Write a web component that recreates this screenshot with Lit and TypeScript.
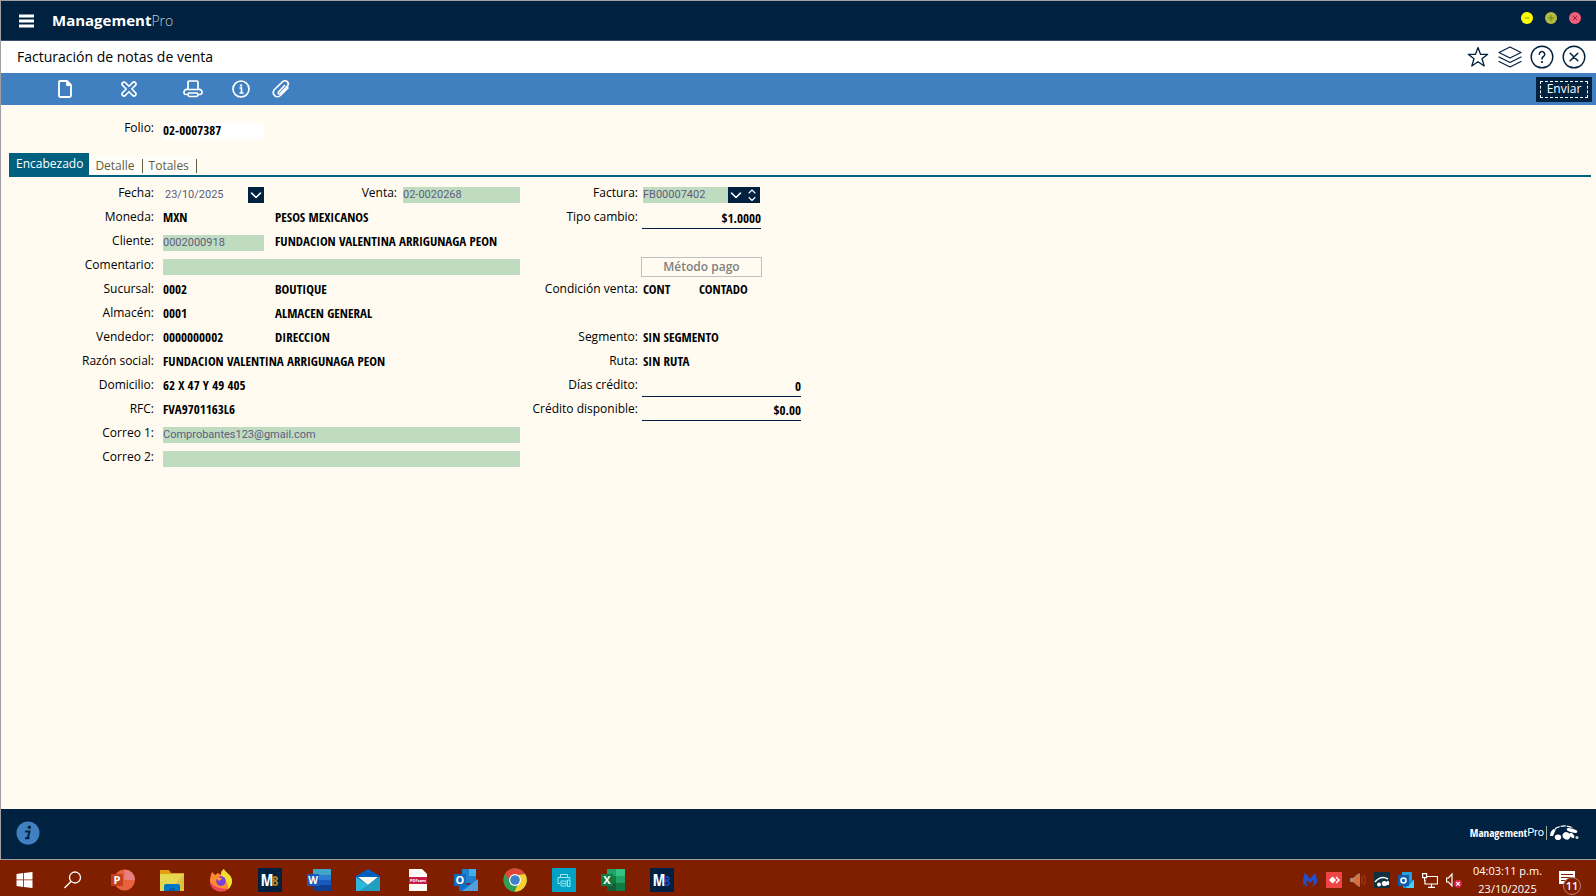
import { LitElement, html, svg, css, nothing, type TemplateResult } from "lit";
import { customElement, property } from "lit/decorators.js";

type Glyph = TemplateResult;

const icon = (size: number, view: string, body: unknown): Glyph =>
  html`<svg width=${size} height=${size} viewBox=${view} fill="none" aria-hidden="true">${body}</svg>`;

const line = (d: string, width = 2) =>
  svg`<path d=${d} stroke="currentColor" stroke-width=${width} stroke-linecap="round" stroke-linejoin="round"/>`;

const icons = {
  menu: icon(16, "0 0 16 16", svg`<path d="M0 3h15M0 8h15M0 13h15" stroke="currentColor" stroke-width="3"/>`),
  page: icon(20, "0 0 20 20", line("M5 2h7l4 4v10.500a1.500 1.500 0 0 1-1.500 1.500h-9A1.500 1.500 0 0 1 4 16.500V3a1 1 0 0 1 1-1zM12 2v4h4", 1.8)),
  cross: icon(20, "0 0 20 20", line("M10 7.300l3.600-3.700a1.900 1.900 0 0 1 2.800 2.800L12.800 10l3.600 3.600a1.900 1.900 0 0 1-2.800 2.800L10 12.700l-3.600 3.700a1.900 1.900 0 0 1-2.800-2.800L7.200 10 3.600 6.400a1.900 1.900 0 0 1 2.800-2.800z", 1.6)),
  print: icon(20, "0 0 20 20", line("M5 10V3a1 1 0 0 1 1-1h8a1 1 0 0 1 1 1v7M4 10.500h12a2.500 2.500 0 0 1 3 2.500v1a2 2 0 0 1-2 1.500h-2M5 15.500H3A2 2 0 0 1 1 14v-1a2.500 2.500 0 0 1 3-2.500M6.500 14h7a1.500 1.500 0 0 1 1.500 1.500A2 2 0 0 1 13.500 17.500h-7A2 2 0 0 1 5 15.500 1.500 1.500 0 0 1 6.500 14z", 1.7)),
  info: icon(20, "0 0 20 20", svg`<circle cx="10" cy="10" r="8" stroke="currentColor" stroke-width="1.700"/><path d="M8.500 9H10.500V14M8.500 14h4" stroke="currentColor" stroke-width="1.600"/><circle cx="10" cy="6.500" r="1.200" fill="currentColor"/>`),
  clip: icon(20, "0 0 20 20", line("M13.500 6.500l-6 6.500a1.200 1.200 0 0 0 1.800 1.600l7-7.400a3.200 3.200 0 0 0-4.600-4.500L3.500 10.500a4.200 4.200 0 0 0 5.900 6l7.600-7.700", 1.7)),
  star: icon(24, "0 0 24 24", line("M12 2.500l2.500 6.800h7.200l-5.700 4.500 2.200 7.200L12 16.800 5.800 21 8 13.800 2.300 9.300h7.200z", 1.3)),
  layers: icon(24, "0 0 24 24", line("M12 2l11 5.500L12 13 1 7.500zM1 12L12 17.500 23 12M1 16.500L12 22l11-5.500", 1.2)),
  help: icon(24, "0 0 24 24", svg`<circle cx="12" cy="12" r="10.800" stroke="currentColor" stroke-width="1.400"/>${line("M9.300 9.200a2.700 2.700 0 1 1 4.200 2.300C12.400 12.200 12 12.800 12 14", 1.5)}<circle cx="12" cy="17" r="1.100" fill="currentColor"/>`),
  close: icon(24, "0 0 24 24", svg`<circle cx="12" cy="12" r="10.800" stroke="currentColor" stroke-width="1.400"/>${line("M8.200 8.200l7.600 7.600M15.800 8.200l-7.600 7.600", 1.5)}`),
  down: icon(16, "0 0 16 16", line("M3.500 6L8 10.500 12.500 6", 1.6)),
  spin: icon(16, "0 0 16 16", line("M5 6l3-3 3 3M5 10.500l3 3 3-3", 1.1)),
  notice: icon(24, "0 0 24 24", svg`<circle cx="12" cy="12" r="11.500" fill="#4080c0"/><circle cx="13.300" cy="6.300" r="1.700" fill="#00213f"/><path d="M9 10.500h4.500l-1.700 6.300h1.700M9 17.300h4.500" stroke="#00213f" stroke-width="2"/>`),
  brand: html`<svg width="30" height="16" viewBox="0 0 30 16" aria-hidden="true">
    <path d="M2 8C6 1 16-1 24 3" fill="none" stroke="#fff" stroke-width="1.300" stroke-dasharray="5 1"/>
    <path d="M1 11c0-3 2-6 6-7L4 11z" fill="#fff"/>
    <ellipse cx="9" cy="12.200" rx="3.200" ry="2.800" fill="#fff"/>
    <ellipse cx="17.500" cy="10.800" rx="4" ry="3.600" fill="#fff" transform="rotate(30 17.500 10.800)"/>
    <ellipse cx="23" cy="5.500" rx="5.500" ry="1.800" fill="#fff" transform="rotate(15 23 5.500)"/>
    <ellipse cx="23" cy="10.500" rx="1.700" ry="3" fill="#fff" transform="rotate(-40 23 10.500)"/>
    <circle cx="28" cy="12.500" r="1.500" fill="#c5e0c5"/></svg>`,
};

const letter = (x: number, y: number, size: number, fill: string, text: string) =>
  svg`<text x=${x} y=${y} font-size=${size} font-weight="700" font-family="Open Sans, sans-serif" text-anchor="middle" fill=${fill}>${text}</text>`;

const monogram = (x: number, y: number, size: number, fill: string, text: string) =>
  svg`<text x=${x} y=${y} font-size=${size} font-weight="700" font-family="Open Sans Condensed, Open Sans, sans-serif" text-anchor="middle" fill=${fill}>${text}</text>`;

const app = (body: unknown) => icon(24, "0 0 24 24", body);

const launchers: { name: string; art: Glyph }[] = [
  { name: "Inicio", art: app(svg`<path d="M3.500 6l6.500-1v6.500H3.500zM10.800 4.900L19.500 4v7.500h-8.700zM3.500 12.300H10v6.700l-6.500-.9zM10.800 12.300h8.700V20l-8.700-.9z" fill="#fff"/>`) },
  { name: "Buscar", art: app(svg`<circle cx="13" cy="9.500" r="5.500" stroke="#fff" stroke-width="1.300"/><path d="M9 13.500L2.500 20" stroke="#fff" stroke-width="1.500"/>`) },
  { name: "PowerPoint", art: app(svg`<circle cx="13.500" cy="12" r="10.500" fill="#e8623f"/><path d="M13.500 1.500A10.500 10.500 0 0 1 24 12H13.500z" fill="#e87f80"/><rect y="6" width="12" height="12" fill="#c43e1c"/>${letter(6, 16, 11, "#fff", "P")}`) },
  { name: "Explorador de archivos", art: app(svg`<path d="M0 2h9l2 3h13v18H0z" fill="#e0a010"/><path d="M0 6h24v17H0z" fill="#e5d850"/><path d="M24 6v17H9z" fill="#e0c040"/><path d="M4 23v-5a2 2 0 0 1 2-2h12a2 2 0 0 1 2 2v5z" fill="#0078c8"/><path d="M9 20h6v3H9z" fill="#0060a8"/>`) },
  { name: "Firefox", art: app(svg`<path d="M3 4l3 3 3-2 3 2c0-3 1-5 3-6 1 4 8 5 8 12a11 10.500 0 0 1-22 0c0-4 1-6 2-9z" fill="#ff8a30"/><path d="M15 1c1 4 8 5 8 12 0 3-2 7-4 8 1-9-6-9-7-14 0-3 1-5 3-6z" fill="#f2e030"/><path d="M1 13c2 5 8 8 18 8-8 5-17 1-18-8z" fill="#f03f60"/><circle cx="12" cy="13" r="4.800" fill="#7b40d8"/><path d="M7 10c2-1 4-1 6 1l-3 2z" fill="#ff9a30"/>`) },
  { name: "Management 8", art: app(svg`<rect width="24" height="24" fill="#00213f"/>${monogram(9, 18, 16, "#fff", "M")}${monogram(17, 18, 15, "#b08a20", "8")}`) },
  { name: "Word", art: app(svg`<path d="M6 1h18v6H6z" fill="#41a5c8"/><path d="M6 7h18v5H6z" fill="#2b7cd3"/><path d="M6 12h18v5H6z" fill="#185abd"/><path d="M6 17h18v6H6z" fill="#103f91"/><rect y="6" width="12" height="12" fill="#185abd"/>${letter(6, 15.5, 10, "#fff", "W")}`) },
  { name: "Correo", art: app(svg`<path d="M0 8l12-7 12 7v15H0z" fill="#0060c0"/><path d="M2 9h20l-10 8z" fill="#fffdf0"/><path d="M0 9l12 8 12-8v14H0z" fill="#30b8dc"/><path d="M24 9v14H3z" fill="#20a0c0"/>`) },
  { name: "PDF", art: app(svg`<path d="M4 1h13l5 5v17H4z" fill="#fffdf5"/><rect x="4" y="9" width="18" height="7" fill="#c81e48"/>${letter(13, 14, 4, "#fff", "PDFsam")}`) },
  { name: "Outlook", art: app(svg`<path d="M8 1h14v14H8z" fill="#2080d0"/><path d="M15 1h7v7h-7z" fill="#40b0e8"/><path d="M5 11l9 6 10-6v12H5z" fill="#1070c8"/><path d="M24 11v12H8z" fill="#50a0e0"/><rect y="6" width="12" height="12" fill="#0f6cbd"/>${letter(6, 16, 11, "#fff", "O")}`) },
  { name: "Chrome", art: app(svg`<circle cx="12" cy="12" r="11.700" fill="#30a050"/><path d="M1.900 6A11.700 11.700 0 0 1 22.100 6L12 7 9 15z" fill="#e04535"/><path d="M22.100 6A11.700 11.700 0 0 1 11.500 23.700L16 14l-1-7z" fill="#f8d030"/><circle cx="12" cy="12" r="6" fill="#fff"/><circle cx="12" cy="12" r="4.800" fill="#4080c8"/>`) },
  { name: "Impresora", art: app(svg`<rect width="24" height="24" fill="#00a3c4"/><path d="M8.500 9V6.500h7V9M8 15.500H6V9.500h12V11M9 18v-5h5v5zM15.500 12h2.500v6.500h-2.500zM10 15.500h3" stroke="#a8e4f0"/>`) },
  { name: "Excel", art: app(svg`<path d="M6 1h9v7H6z" fill="#21a366"/><path d="M15 1h9v7h-9z" fill="#33c481"/><path d="M6 8h9v7H6z" fill="#107c41"/><path d="M15 8h9v7h-9z" fill="#21a366"/><path d="M6 15h18v8H6z" fill="#185c37"/><path d="M15 15h9v8h-9z" fill="#107c41"/><rect y="6" width="12" height="12" fill="#107c41"/>${letter(6, 16, 11, "#fff", "X")}`) },
  { name: "ManagementPro", art: app(svg`<rect width="24" height="24" fill="#00213f"/>${monogram(9, 18, 16, "#fff", "M")}${monogram(17, 18, 15, "#1848c0", "8")}`) },
];

const tray: { name: string; art: Glyph }[] = [
  { name: "Malwarebytes", art: icon(16, "0 0 16 16", svg`<path d="M2 1c3 1 4 4 6 6 2-2 3-5 6-6-1 3 2 6 1 9-1 2-3 4-5 4 2-2 2-4 1-6l-3 3-3-3c-1 2-1 4 1 6-3 0-5-2-5-5 0-3 2-5 1-8z" fill="#2050d0"/>`) },
  { name: "AnyDesk", art: icon(16, "0 0 16 16", svg`<rect width="16" height="16" fill="#ef4444"/><path d="M6.500 4.500L10 8l-3.500 3.500L3 8z" fill="#fff"/><path d="M9.500 5.500l1-1L14 8l-3.500 3.500-1-1L12 8z" fill="#fff"/>`) },
  { name: "Audio", art: icon(16, "0 0 16 16", svg`<path d="M0 6h3l6-5v14L3 10H0z" fill="#a88a80"/><path d="M4 7l6-6v14L4 10z" fill="#d8703a"/><path d="M11.500 4q2 4 0 8M14 3q3 5 0 10" stroke="#a04020" stroke-width="1"/>`) },
  { name: "Management", art: icon(16, "0 0 16 16", svg`<rect width="16" height="16" fill="#103040"/><path d="M1 10q6-7 13-3" stroke="#fff" stroke-width="1.500"/><circle cx="5" cy="12.500" r="2" fill="#fff"/><ellipse cx="10.500" cy="11.500" rx="2.800" ry="2.500" fill="#fff"/><ellipse cx="14" cy="11" rx="1.200" ry="2.200" fill="#fff"/>`) },
  { name: "Outlook", art: icon(16, "0 0 16 16", svg`<path d="M4 0h10v8H4z" fill="#28a0e0"/><path d="M5 8h11v8H5z" fill="#1490df"/><path d="M16 8v8H8z" fill="#50d0f0"/><rect y="3" width="11" height="11" fill="#0f5cae"/><circle cx="5.500" cy="8.500" r="2.500" stroke="#fff" stroke-width="1.600"/>`) },
  { name: "Red", art: icon(16, "0 0 16 16", svg`<path d="M5 4.500h10.500v7.500H3V8M9.500 12v3M6 15.300h7M.6 1.600h4v4h-4zM2.600 5.600V9" stroke="#fff" stroke-width="1.200"/>`) },
  { name: "Volumen silenciado", art: icon(16, "0 0 16 16", svg`<path d="M.6 6H2.500L6 2v12L2.500 10H.6z" stroke="#fff" stroke-width="1.200"/><circle cx="12" cy="11.800" r="4" fill="#e0204c"/><path d="M10.200 10l3.600 3.600M13.800 10l-3.600 3.600" stroke="#fff" stroke-width="1.200"/>`) },
];

interface Row {
  label: string;
  id: string;
  code?: string;
  name?: string;
  kind?: "code" | "wide" | "text" | "date";
}

const leftRows: Row[] = [
  { label: "Fecha:", id: "fecha", code: "23/10/2025", kind: "date" },
  { label: "Moneda:", id: "moneda", code: "MXN", name: "PESOS MEXICANOS" },
  { label: "Cliente:", id: "cliente", code: "0002000918", name: "FUNDACION VALENTINA ARRIGUNAGA PEON", kind: "code" },
  { label: "Comentario:", id: "comentario", code: "", kind: "wide" },
  { label: "Sucursal:", id: "sucursal", code: "0002", name: "BOUTIQUE" },
  { label: "Almacén:", id: "almacen", code: "0001", name: "ALMACEN GENERAL" },
  { label: "Vendedor:", id: "vendedor", code: "0000000002", name: "DIRECCION" },
  { label: "Razón social:", id: "razon", code: "FUNDACION VALENTINA ARRIGUNAGA PEON", kind: "text" },
  { label: "Domicilio:", id: "domicilio", code: "62 X 47 Y 49 405", kind: "text" },
  { label: "RFC:", id: "rfc", code: "FVA9701163L6", kind: "text" },
  { label: "Correo 1:", id: "correo1", code: "Comprobantes123@gmail.com", kind: "wide" },
  { label: "Correo 2:", id: "correo2", code: "", kind: "wide" },
];

const shared = css`
  *, *::before, *::after { box-sizing: border-box; }
  button, input { font: inherit; color: inherit; margin: 0; border: 0; padding: 0; background: none; border-radius: 0; }
  button { cursor: pointer; display: inline-flex; align-items: center; justify-content: center; }
  svg { display: block; flex: none; }
`;

@customElement("invoice-form")
export class InvoiceForm extends LitElement {
  static styles = [
    shared,
    css`
      :host { display: block; color: #000; font: 12px/16px "Open Sans", sans-serif; }
      .form { display: flex; padding-top: 8px; }
      .left { flex: 0 0 520px; }
      .right { flex: 0 0 281px; }
      .row { display: grid; height: 24px; grid-template-rows: 18px; align-items: end; }
      .left .row { grid-template-columns: 163px 112px 128px 117px; }
      .right .row { grid-template-columns: 123px 56px 102px; }
      label, .caption { align-self: start; text-align: right; padding-right: 9px; white-space: nowrap; }
      .right label, .right .caption { padding-right: 5px; }
      .value { padding-bottom: 3px; font: 700 13px/13px "Open Sans Condensed", "Open Sans", sans-serif; white-space: nowrap; }
      .span { grid-column: 2 / -1; }
      .field { display: block; width: 100%; height: 16px; background: #c0dcc0; color: #5c5c80; font: 11px/16px Roboto, sans-serif; }
      .code { width: 101px; }
      .date { display: flex; width: 101px; }
      .date .field { flex: 1; min-width: 0; padding-left: 2px; background: none; }
      .picker { background: #00213f; color: #fff; width: 16px; height: 16px; }
      .left .venta { padding-right: 6px; }
      .invoice { display: flex; grid-column: 2 / -1; width: 117px; }
      .invoice .field { flex: 1; min-width: 0; }
      .amount { grid-column: 2 / -1; height: 20px; padding-top: 3px; margin: 0 0 -2px -1px; text-align: right; border-bottom: 1px solid #00213f; }
      .short { width: 119px; }
      .method { grid-column: 2 / -1; width: 121px; height: 20px; margin: 0 0 -2px -2px; border: 1px solid #c0c0c0; color: #808080; font-weight: 600; cursor: default; }
    `,
  ];

  private left(r: Row) {
    if (r.kind === "date")
      return html`<div class="row">
        <label for="fecha">Fecha:</label>
        <div class="date"><input class="field" id="fecha" .value=${r.code ?? ""} /><button class="picker" aria-label="Elegir fecha">${icons.down}</button></div>
        <label class="venta" for="venta">Venta:</label>
        <input class="field" id="venta" value="02-0020268" />
      </div>`;
    if (r.kind === "wide" || r.kind === "code")
      return html`<div class="row">
        <label for=${r.id}>${r.label}</label>
        <input class="field ${r.kind === "wide" ? "span" : "code"}" id=${r.id} .value=${r.code ?? ""} />
        ${r.name ? html`<span class="value">${r.name}</span>` : nothing}
      </div>`;
    return html`<div class="row">
      <span class="caption">${r.label}</span>
      <span class="value ${r.kind === "text" ? "span" : ""}">${r.code}</span>
      ${r.name ? html`<span class="value">${r.name}</span>` : nothing}
    </div>`;
  }

  render() {
    const pair = (label: string, code: string, name = "") => html`<div class="row">
      <span class="caption">${label}</span><span class="value">${code}</span>${name ? html`<span class="value">${name}</span>` : nothing}</div>`;
    const amount = (label: string, value: string, short = false) => html`<div class="row">
      <span class="caption">${label}</span><span class="value amount ${short ? "short" : ""}">${value}</span></div>`;
    return html`<div class="form">
      <div class="left">${leftRows.map((r) => this.left(r))}</div>
      <div class="right">
        <div class="row">
          <label for="factura">Factura:</label>
          <div class="invoice"><input class="field" id="factura" value="FB00007402" /><button class="picker" aria-label="Abrir lista">${icons.down}</button><button class="picker" aria-label="Cambiar folio">${icons.spin}</button></div>
        </div>
        ${amount("Tipo cambio:", "$1.0000", true)}
        <div class="row"></div>
        <div class="row"><button class="method" disabled>Método pago</button></div>
        ${pair("Condición venta:", "CONT", "CONTADO")}
        <div class="row"></div>
        ${pair("Segmento:", "SIN SEGMENTO")}
        ${pair("Ruta:", "SIN RUTA")}
        ${amount("Días crédito:", "0")}
        ${amount("Crédito disponible:", "$0.00")}
      </div>
    </div>`;
  }
}

@customElement("task-bar")
export class TaskBar extends LitElement {
  static styles = [
    shared,
    css`
      :host { display: flex; justify-content: space-between; height: 37px; padding-top: 3px; border-top: 1px solid #a0a0a4; background: #801e00; color: #fff; font: 12px/18px "Open Sans", sans-serif; }
      .apps, .tray { display: flex; align-items: center; }
      .apps button { width: 49px; height: 36px; }
      .tray { padding-right: 16px; }
      .tray .mini { width: 24px; height: 24px; }
      .clock { width: 89px; padding-right: 6px; text-align: center; font-size: 11px; white-space: nowrap; }
      .alerts { position: relative; width: 25px; height: 24px; }
      .count { position: absolute; left: 8px; top: 9px; width: 18px; height: 18px; border: 1px solid #c08070; border-radius: 50%; background: #801e00; font: 600 11px/15px "Open Sans", sans-serif; text-align: center; }
    `,
  ];
  @property() time = "04:03:11 p.m.";
  @property() date = "23/10/2025";

  render() {
    return html`
      <div class="apps">${launchers.map((l) => html`<button aria-label=${l.name}>${l.art}</button>`)}</div>
      <div class="tray">
        ${tray.map((t) => html`<button class="mini" aria-label=${t.name}>${t.art}</button>`)}
        <div class="clock">${this.time}<br />${this.date}</div>
        <button class="alerts" aria-label="Notificaciones">
          ${icon(24, "0 0 24 24", svg`<path d="M3 3h16v13h-7l-4 4v-4H3z" fill="#fff"/><path d="M5 6.500h12M5 9.500h12M5 12.500h8" stroke="#801e00"/>`)}
          <span class="count">11</span>
        </button>
      </div>`;
  }
}

@customElement("app-root")
export class AppRoot extends LitElement {
  static styles = [
    shared,
    css`
      :host { display: flex; flex-direction: column; min-height: 100vh; font: 12px/16px "Open Sans", sans-serif; background: #fffbf0; }
      .window { flex: 1; display: flex; flex-direction: column; border-left: 1px solid #a0a0a4; }
      .brandbar { display: flex; align-items: center; height: 41px; padding: 0 15px 0 18px; background: #00213f; color: #fff; border-top: 1px solid #a0a0a4; border-bottom: 1px solid #405070; }
      .brand { margin-left: 17px; font-size: 15px; line-height: 20px; }
      .brand b { font-weight: 700; }
      .brand span { font-size: 14px; font-weight: 300; color: #c0d0d0; }
      .dots { display: flex; gap: 12px; margin: 0 0 5px auto; }
      .dots button { width: 12px; height: 12px; border-radius: 50%; }
      .min { background: #ffff00; color: #a0a000; }
      .max { background: #b8b840; color: #509010; }
      .end { background: #f06078; color: #a02040; }
      .titlebar { display: flex; align-items: center; justify-content: space-between; height: 32px; padding: 0 10px 0 16px; background: #fff; color: #000; }
      h1 { margin: 0; font: 400 14px/20px "Open Sans", sans-serif; }
      .window-tools { display: flex; gap: 8px; color: #00213f; }
      .toolbar { display: flex; align-items: center; height: 32px; padding: 0 4px 0 54px; background: #4080c0; color: #fff; }
      .new { margin-right: 44px; }
      .void { margin-right: 44px; }
      .printer { margin-right: 28px; }
      .about { margin-right: 20px; }
      .send { margin-left: auto; width: 56px; height: 25px; background: #00213f; }
      .send span { width: 48px; height: 17px; line-height: 13px; border: 1px dashed #fff; }
      .folio { display: flex; height: 48px; padding: 15px 0 0; }
      .folio label { width: 162px; padding-right: 9px; text-align: right; }
      .folio input { width: 101px; height: 16px; margin-top: 3px; padding-bottom: 3px; background: #fff; font: 700 13px/13px "Open Sans Condensed", "Open Sans", sans-serif; }
      .tabs { display: flex; align-items: flex-end; height: 24px; margin: 0 5px 0 8px; border-bottom: 2px solid #006080; }
      .tab { height: 19px; color: #606040; background: #fffdf8; padding: 0 0 0 6px; }
      .tab span { border-right: 1px solid #606040; padding-right: 7px; line-height: 14px; }
      .active { height: 22px; padding: 0 6px 0 7px; background: #006080; color: #fff; }
      main { flex: 1; }
      invoice-form { padding-right: 4px; margin-left: -1px; }
      footer { display: flex; align-items: center; justify-content: space-between; height: 50px; padding: 0 17px 2px 15px; background: #00213f; color: #fff; }
      .sign { display: flex; align-items: center; }
      .sign b { font: 700 11px/16px "Open Sans Condensed", "Open Sans", sans-serif; }
      .sign span { font: 400 11px/14px Roboto, sans-serif; padding-right: 2px; margin-right: 2px; border-right: 1px solid #a0b0a0; }
    `,
  ];

  render() {
    return html`
      <div class="window">
        <header class="brandbar">
          <button aria-label="Menú">${icons.menu}</button>
          <div class="brand"><b>Management</b><span>Pro</span></div>
          <div class="dots">
            <button class="min" aria-label="Minimizar">${icon(12, "0 0 12 12", line("M4 6h4", 1))}</button>
            <button class="max" aria-label="Maximizar">${icon(12, "0 0 12 12", line("M3.500 6h5M6 3.500v5", 1))}</button>
            <button class="end" aria-label="Salir">${icon(12, "0 0 12 12", line("M4 4l4 4M8 4l-4 4", 1))}</button>
          </div>
        </header>
        <div class="titlebar">
          <h1>Facturación de notas de venta</h1>
          <div class="window-tools">
            <button aria-label="Favorito">${icons.star}</button>
            <button aria-label="Capas">${icons.layers}</button>
            <button aria-label="Ayuda">${icons.help}</button>
            <button aria-label="Cerrar">${icons.close}</button>
          </div>
        </div>
        <div class="toolbar">
          <button class="new" aria-label="Nuevo">${icons.page}</button>
          <button class="void" aria-label="Cancelar">${icons.cross}</button>
          <button class="printer" aria-label="Imprimir">${icons.print}</button>
          <button class="about" aria-label="Información">${icons.info}</button>
          <button aria-label="Adjuntar">${icons.clip}</button>
          <button class="send"><span>Enviar</span></button>
        </div>
        <main>
          <div class="folio"><label for="folio">Folio:</label><input id="folio" value="02-0007387" readonly /></div>
          <nav class="tabs" role="tablist">
            <button class="active" role="tab" aria-selected="true">Encabezado</button>
            <button class="tab" role="tab" aria-selected="false"><span>Detalle</span></button>
            <button class="tab" role="tab" aria-selected="false"><span>Totales</span></button>
          </nav>
          <invoice-form></invoice-form>
        </main>
        <footer>
          <button aria-label="Información del sistema">${icons.notice}</button>
          <div class="sign"><b>Management</b><span>Pro</span>${icons.brand}</div>
        </footer>
      </div>
      <task-bar></task-bar>`;
  }
}
